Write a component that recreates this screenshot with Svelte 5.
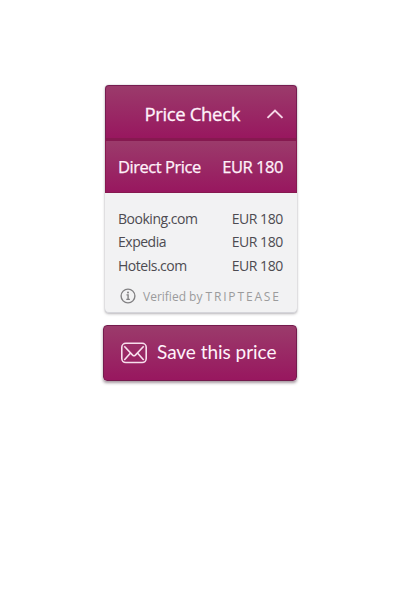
<script>
  const rates = [
    { site: 'Booking.com', price: 'EUR 180' },
    { site: 'Expedia', price: 'EUR 180' },
    { site: 'Hotels.com', price: 'EUR 180' }
  ];
</script>

<main>
  <section class="card">
    <header>
      <h1>Price Check</h1>
      <svg class="chevron" width="18" height="12" viewBox="0 0 18 12"><path d="M1.5 9.9 9 2.6l7.5 7.3" /></svg>
    </header>
    <div class="direct">
      <span>Direct Price</span>
      <span class="amount">EUR 180</span>
    </div>
    <ul>
      {#each rates as rate}
        <li><span>{rate.site}</span><span class="price">{rate.price}</span></li>
      {/each}
    </ul>
    <footer>
      <svg width="16" height="16" viewBox="0 0 16 16">
        <circle cx="8" cy="8" r="6.9" />
        <path d="M6.5 6.9H8.1V11.2M6.3 11.4H9.9" />
        <circle class="dot" cx="8" cy="4.5" r="1" />
      </svg>
      <span class="verified">Verified by</span>
      <span class="brand">TRIPTEASE</span>
    </footer>
  </section>
  <button>
    <svg width="28" height="22" viewBox="0 0 28 22">
      <rect x="1.8" y="1.3" width="24.4" height="19.2" rx="4" />
      <path d="M4.3 4.2 12.6 13.1q1.4 1.3 2.8 0L23.7 4.2M4.3 18l6.2-7M23.7 18l-6.2-7" />
    </svg>
    <span>Save this price</span>
  </button>
</main>

<style>
  :global(body) { margin: 0; background: #fff; }
  main {
    box-sizing: border-box;
    width: 400px;
    height: 600px;
    padding: 85px 103px 0;
    font-family: "Open Sans", sans-serif;
    display: flex;
    flex-direction: column;
    align-items: flex-end;
  }
  .card {
    width: 192px;
    height: 228px;
    border-radius: 4px;
    background: #f2f2f3;
    box-shadow: 0 1px 3px #55505866, 0 0 1px #77758090, inset 0 -1px #d5d5da;
  }
  header, .direct, button {
    box-sizing: border-box;
    background: linear-gradient(#9b3b6b, #98175f);
    color: #fff2fa;
  }
  header {
    height: 56px;
    display: flex;
    align-items: center;
    padding: 3px 12.5px 0 38.5px;
    justify-content: space-between;
    border-radius: 4px 4px 0 0;
    border: 1px solid #761c50;
    border-bottom: 3px solid #861950;
  }
  h1 {
    margin: 0;
    font-size: 18.5px;
    line-height: 26px;
    font-weight: 500;
    letter-spacing: -0.35px;
    white-space: nowrap;
    -webkit-text-stroke: 0.3px currentColor;
  }
  svg { display: block; fill: none; stroke: currentColor; flex: none; }
  .chevron { stroke-width: 2; color: #f5d7e7; }
  .direct {
    height: 52px;
    padding: 0 13px 1px 12px;
    display: flex;
    align-items: center;
    justify-content: space-between;
    font-size: 16.5px;
    font-weight: 500;
    letter-spacing: -0.45px;
    border: solid #86194f;
    border-width: 0 1px 1px;
    -webkit-text-stroke: 0.25px currentColor;
  }
  ul {
    list-style: none;
    margin: 0;
    padding: 14px 14.3px 0 13px;
  }
  li {
    height: 23.4px;
    line-height: 23.4px;
    display: flex;
    justify-content: space-between;
    font-size: 14px;
    letter-spacing: -0.48px;
    color: #4d4b51;
  }
  footer {
    height: 20px;
    margin-top: 9px;
    padding-left: 14.5px;
    display: flex;
    align-items: center;
    color: #9b9b9c;
    font-size: 12px;
    white-space: nowrap;
  }
  footer svg { color: #828183; stroke-width: 1.4; }
  .dot { fill: currentColor; stroke: none; }
  .verified { margin-left: 7.5px; }
  .brand { margin-left: 3px; letter-spacing: 1.85px; }
  button {
    width: 194px;
    height: 56px;
    margin: 12px 0 0;
    padding: 0 0 0 16px;
    border: 1px solid #741b4d;
    border-radius: 4px;
    display: flex;
    align-items: center;
    font: 19px Lato, sans-serif;
    box-shadow: 0 2px 3px #30152570;
    white-space: nowrap;
  }
  button svg { stroke-width: 1.6; color: #f8dfed; }
  button span { margin: -3px 0 0 9px; letter-spacing: -0.04px; }
</style>
